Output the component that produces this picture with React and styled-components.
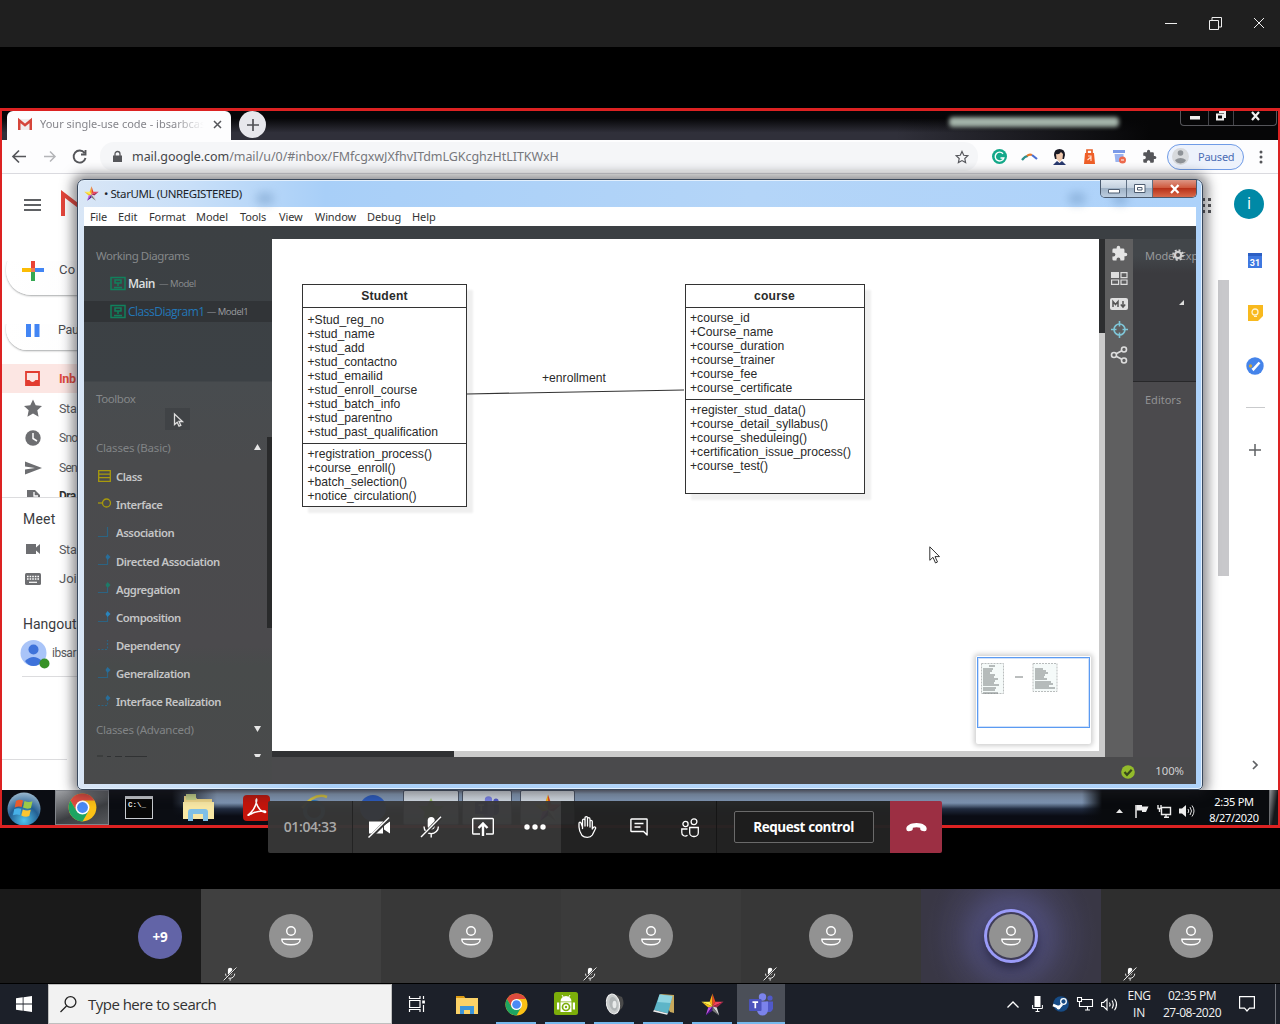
import React from 'react';
import styled, { createGlobalStyle, css } from 'styled-components';

const ui = '"Open Sans", "Noto Sans", sans-serif';
const noto = '"Noto Sans", "Open Sans", sans-serif';
const roboto = 'Roboto, sans-serif';

const Global = createGlobalStyle`
  *, *::before, *::after { box-sizing: border-box; }
  html, body { margin: 0; padding: 0; background: #000; }
  body { width: 1280px; height: 1024px; overflow: hidden; font-family: ${ui}; }
  svg { display: block; flex: none; overflow: visible; }
`;

const row = css`display: flex; align-items: center;`;
const center = css`display: flex; align-items: center; justify-content: center;`;

const Label = styled.span`
  font-family: ${p => p.$font || ui};
  font-size: ${p => p.$size || 12}px;
  font-weight: ${p => p.$weight || 400};
  letter-spacing: ${p => p.$track || 0}px;
  color: ${p => p.$color || 'inherit'};
  line-height: 1.2;
  white-space: nowrap;
`;

/* ---------- Outer frame ---------- */
const Desktop = styled.div`
  width: 1280px; height: 1024px; display: flex; flex-direction: column; background: #000; overflow: hidden;
`;
const TitleBar = styled.header`
  ${row} height: 47px; flex: none; background: #1f1f1f; justify-content: flex-end; padding: 0 15px 1px 0; gap: 32px;
`;
const Stage = styled.main`
  position: relative; height: 842px; flex: none; padding-top: 61px; background: #000;
`;

/* ---------- Shared screen ---------- */
const Shared = styled.section`
  position: relative; width: 1280px; height: 720px; display: flex; flex-direction: column; overflow: hidden;
  border: solid #dc2222; border-width: 3px 2px; background: #fff;
`;
const TabStrip = styled.div`
  position: relative; display: flex; height: 29px; flex: none; padding-left: 5px;
  background: linear-gradient(90deg, rgba(0,0,0,0) 70%, #060607 90%), linear-gradient(#050507 25%, #30303a 75%);
`;
const Tab = styled.div`
  ${row} width: 224px; height: 29px; padding: 0 9px 3px 11px; background: #fdfdfe; border-radius: 6px 6px 0 0;
`;
const TabTitle = styled(Label)`
  width: 168px; margin-left: 8px; overflow: hidden;
  mask-image: linear-gradient(90deg, #000 80%, transparent 98%);
`;
const NewTab = styled.div`
  ${center} width: 27px; height: 27px; margin-left: 8px; border-radius: 50%; background: #e7e7ec;
`;
const GlassGlow = styled.div`
  width: 170px; height: 10px; margin: 6px 0 0 683px; border-radius: 4px; background: #a3b3a9; filter: blur(2px);
`;
const ChromeControls = styled.div`
  display: flex; width: 97px; height: 15px; margin-left: 61px; border: 1px solid #55555a; border-top: 0; border-radius: 0 0 4px 4px;
  & > div { ${center} border-right: 1px solid #45454a; flex: 0 0 28px; padding-bottom: 4px; }
  & > div:nth-child(2) { flex-basis: 25px; }
  & > div:first-child { padding-bottom: 0; }
  & > div:last-child { flex: 1; border: 0; }
`;
const AddressBar = styled.div`
  ${row} height: 34px; flex: none; border-bottom: 1px solid #dadadf; background: #fdfdfe;
`;
const NavIcons = styled.div` ${row} width: 98px; padding-left: 10px; gap: 15px; `;
const Omnibox = styled.div`
  ${row} width: 878px; height: 29px; padding: 0 9px 0 12px; background: #f5f6f8; border-radius: 14px;
  & > svg:last-child { margin-left: auto; }
`;
const Url = styled(Label)` margin-left: 9px; color: #77787c; b { color: #45464a; font-weight: 400; } `;
const Extensions = styled.div` display: grid; grid-template-columns: repeat(6, 30px); margin-left: 6px; justify-items: center; align-items: center; `;
const ProfilePill = styled.div`
  ${row} width: 77px; height: 26px; margin-left: 3px; padding-left: 4px; gap: 9px; border: 1px solid #6f9be6; border-radius: 13px; background: #edf2fc;
`;
const PageArea = styled.div` display: flex; height: 616px; flex: none; justify-content: space-between; `;

const Sidebar = styled.nav` width: 77px; overflow: hidden; `;
const GmailHead = styled.div` ${row} height: 62px; padding-left: 22px; gap: 20px; `;
const Card = styled.div`
  ${row} width: 120px; height: ${p => p.$h}px; margin: ${p => p.$m}; padding-left: ${p => p.$pad}px; gap: ${p => p.$gap}px;
  border-radius: ${p => p.$h / 2}px; background: linear-gradient(90deg, #fff, #fcfcfd); box-shadow: 0 1px 2px rgba(60,64,67,.45);
  clip-path: inset(16px -6px -6px -6px);
`;
const NavRow = styled.div`
  ${row} height: ${p => p.$h || 30}px; width: 140px; overflow: hidden; align-items: ${p => (p.$cut ? 'flex-start' : 'center')};
  padding-top: ${p => (p.$cut ? 6 : 0)}px; padding-left: 22px; background: ${p => (p.$active ? '#fce6e3' : 'transparent')};
  svg { margin-right: 17px; }
`;
const NavHead = styled.div` ${row} height: 30px; margin-top: ${p => p.$mt}px; padding-left: 21px; `;
const Contact = styled.div` ${row} height: 28px; padding-left: 18px; gap: 3px; `;
const Divider = styled.div` height: 1px; width: ${p => p.$w}px; margin: ${p => p.$m}; background: #dcdcde; `;

const RightRail = styled.aside` display: flex; width: 77px; `;
const AppsCol = styled.div` width: 17px; padding: 24px 0 0 1px; `;
const ScrollCol = styled.div`
  width: 11px; padding-top: 106px; &::after { content: ''; display: block; height: 296px; background: #c8c8cb; }
`;
const AddonCol = styled.div` position: relative; width: 49px; display: flex; flex-direction: column; align-items: center; padding: 15px 0 0 3px; `;
const InitialDisc = styled.div` ${center} width: 30px; height: 30px; margin: 0 12px 0 0; flex: none; border-radius: 50%; background: #0089a6; color: #fff; `;
const Slot = styled.div` ${center} height: ${p => p.$h}px; flex: none; `;

/* ---------- StarUML window ---------- */
const AppWindow = styled.div`
  position: absolute; left: 75px; top: 68px; width: 1126px; height: 611px; display: flex; flex-direction: column;
  border: 1px solid #39485c; border-radius: 7px 7px 5px 5px; padding: 0 6px 5px;
  background: linear-gradient(90deg, #d9e6f6, #c8dff8 10%, #a8cff8 22%, #b4d5f8 60%, #add2fa 100%);
  box-shadow: 0 0 12px 5px rgba(30,30,35,.5), inset 0 0 0 1px #e3f0fd;
`;
const WinTitle = styled.div` ${row} position: relative; height: 27px; flex: none; `;
const WinName = styled(Label)` margin-left: 5px; color: #1b1f2a; `;
const Smudge = styled.i`
  position: absolute; left: ${p => p.$x}px; top: 12px; width: ${p => p.$w}px; height: 13px; background: #5d87b5; opacity: .35; filter: blur(4px); border-radius: 6px;
`;
const AeroButtons = styled.div`
  position: relative; display: flex; width: 97px; height: 18px; margin: 0 -1px 9px auto; border: 1px solid #4a5b70; border-top: 0; border-radius: 0 0 5px 5px; overflow: hidden;
`;
const AeroBtn = styled.div`
  ${center} flex: 0 0 ${p => p.$w}px; border-right: 1px solid #5f7084;
  background: ${p => (p.$close ? 'linear-gradient(#dd9685, #cf5a3f 45%, #b8321a 50%, #d8694a)' : 'linear-gradient(#dfe8f1, #c4d1df 45%, #9fb2c6 50%, #bccddf)')};
`;
const MenuBar = styled.div` ${row} height: 19px; flex: none; background: #fff; padding-left: 6px; `;
const MenuItem = styled(Label)` width: ${p => p.$w}px; color: #333; flex: none; `;
const WinBody = styled.div` display: flex; height: 558px; flex: none; background: #3b3f43; `;

const LeftPanel = styled.div`
  position: relative; width: 188px; display: flex; flex-direction: column;
  background: linear-gradient(#3c4043 0, #3c4145 155px, #484c4f 156px, #4a4b4d 240px, #4b4a4d 420px, #484b4b 440px, #494a4b);
`;
const Working = styled.div` height: 155px; flex: none; padding-top: 19px; `;
const PanelHead = styled.div` ${row} height: ${p => p.$h}px; padding-left: 12px; color: #85888a; margin: ${p => p.$m || 0}; `;
const DiagramRow = styled.div`
  ${row} height: ${p => p.$h}px; margin-bottom: 5px; padding: 1px 0 0 26px; gap: 2px; background: ${p => (p.$active ? '#313437' : 'transparent')};
  color: ${p => (p.$active ? '#2377b8' : '#dfe0e1')};
`;
const CursorTool = styled.div` ${center} width: 25px; height: 22px; margin-left: 81px; padding: 2px 0 0 2px; background: #404346; `;
const GroupHead = styled.div`
  ${row} height: ${p => p.$h}px; margin-top: ${p => p.$mt || 0}px; padding: 0 11px 0 12px; justify-content: space-between; overflow: hidden; color: #818486;
`;
const ToolRow = styled.div` ${row} height: 28.1px; padding: 2px 0 0 14px; gap: 5px; color: #c4c5c6; svg { margin-top: -2px; } `;
const PanelThumb = styled.div` position: absolute; right: 0; top: 211px; width: 5px; height: 191px; background: #292a2b; `;

const MainCol = styled.div` display: flex; flex-direction: column; width: 924px; padding-top: 13px; `;
const MainRow = styled.div` display: flex; height: 518px; `;
const CanvasFrame = styled.div`
  display: grid; width: 833px; grid-template-columns: 827px 6px; grid-template-rows: 512px 6px;
`;
const Canvas = styled.div` position: relative; background: #fff; `;
const VScroll = styled.div` background: linear-gradient(#2d2e30 94px, #cbcbcb 94px); `;
const HScroll = styled.div` grid-column: 1 / 3; background: linear-gradient(90deg, #303133 182px, #cbcbcb 182px); `;

const UmlClass = styled.div`
  position: absolute; left: ${p => p.$x}px; top: 45px; width: ${p => p.$w}px; height: ${p => p.$h}px; background: #fff;
  border: 1px solid #333; box-shadow: 6px 6px 2px #efefef; color: #2a2a2a; font: 12.150px/14px "Liberation Sans", Arial, sans-serif;
`;
const UmlName = styled.div` ${center} height: 23px; border-bottom: 1px solid #333; font-weight: 700; letter-spacing: .2px; `;
const UmlList = styled.div`
  height: ${p => p.$h}px; padding: ${p => p.$pt}px 0 0 4.500px; border-bottom: ${p => (p.$rule ? '1px solid #333' : 0)}; white-space: nowrap;
`;
const LinkLabel = styled.span` position: absolute; left: 270px; top: 132px; font: 12.150px/15px "Liberation Sans", Arial, sans-serif; color: #2a2a2a; `;
const LinkLine = styled.svg` position: absolute; left: 195px; top: 148px; `;
const Pointer = styled.svg` position: absolute; left: 657px; top: 307px; `;
const MiniMap = styled.div`
  position: absolute; left: 704px; top: 417px; width: 115px; height: 88px; padding: 1px; background: #fff; border-radius: 2px; box-shadow: 0 0 5px 2px #cfcfcf;
`;
const MiniView = styled.div` height: 71px; border: 1px solid #5b9bf2; box-shadow: inset 0 0 0 1px #cfe0fa; padding: 5px 3px; display: flex; `;

const ToolStrip = styled.div` width: 28px; display: flex; flex-direction: column; align-items: center; background: #5f5f60; padding-top: 2px; `;
const StripCell = styled.div` ${center} height: 25.3px; `;
const Explorer = styled.div` width: 63px; overflow: hidden; background: #4b4a4d; `;
const ModelPane = styled.div` position: relative; height: 143px; background: #3b3b3f; border-bottom: 1px solid #28282a; `;
const ModelHead = styled.div` ${row} height: 34px; padding-left: 12px; color: #98999b; white-space: nowrap; background: linear-gradient(#42464a 50%, #3b3b3f); `;
const Gear = styled.div` position: absolute; left: 39px; top: 10px; `;
const Corner = styled.div` position: absolute; left: 46px; top: 61px; border: solid transparent; border-width: 0 0 5px 5px; border-bottom-color: #ddd; `;
const EditorHead = styled.div` ${row} height: 35px; padding-left: 12px; color: #929294; `;
const StatusBar = styled.div` ${row} height: 27px; background: #4a4a4c; justify-content: flex-end; padding-right: 12px; gap: 20px; `;

/* ---------- Windows 7 taskbar ---------- */
const SevenBar = styled.div`
  display: flex; height: 35px; flex: none; padding-left: 3px;
  background:
    linear-gradient(90deg, #0b0d13 170px, rgba(11,13,19,0) 215px, rgba(11,13,19,0) 1080px, #090b0e 1100px),
    linear-gradient(#6f7686 0, #8ba1bd 4px, #7e94b2 13px, #202a3e 19px, #0a0c14 26px);
`;
const SevenCell = styled.div`
  ${center} flex: 0 0 ${p => p.$w}px; margin-left: ${p => p.$ml || 0}px;
  ${p => p.$open && css`background: linear-gradient(160deg, #a0a2a6, #3c3e42 60%, #55575b); border: 1px solid #83868c;`}
  ${p => p.$lit && css`background: linear-gradient(#e3e8ee, #a9b8cb); border: 1px solid #4b5669; border-radius: 2px;`}
`;
const SevenTray = styled.div` ${row} margin-left: auto; gap: 8px; color: #fff; & > svg { margin-top: 6px; } `;
const SevenClock = styled.div` width: 58px; margin: 4px -2px 0 3px; text-align: center; span { display: block; line-height: 15.5px; } `;
const ShowDesk = styled.div` width: 9px; height: 35px; background: linear-gradient(100deg, #8e9093, #15171a 60%); border-left: 1px solid #6b6d70; `;

/* ---------- Meeting controls ---------- */
const CallBar = styled.div`
  position: absolute; left: 268px; top: 754px; width: 674px; height: 52px; display: flex; border-radius: 2px; overflow: hidden; color: #fff;
`;
const CallTimer = styled.div` ${center} width: 85px; background: rgba(55,55,55,.97); border-right: 1px solid #232323; color: #a8a8a8; `;
const CallGroup = styled.div`
  display: flex; width: ${p => p.$w}px; background: ${p => (p.$dark ? 'rgba(35,35,35,.97)' : 'rgba(55,55,55,.96)')}; border-right: ${p => (p.$line ? '1px solid #151515' : 0)};
`;
const CallBtn = styled.div` ${center} width: 52px; `;
const CallAction = styled.div` ${center} width: 173px; background: rgba(35,35,35,.97); `;
const RequestBtn = styled.div` ${center} width: 140px; height: 32px; margin-right: 0; border: 1px solid #6a6a6a; border-radius: 2px; background: #1d1d1d; `;
const HangUp = styled.div` ${center} width: 52px; background: #9c2f43; `;

/* ---------- Participants ---------- */
const Roster = styled.section` display: flex; height: 94px; flex: none; `;
const Tile = styled.div`
  position: relative; ${center} flex: ${p => p.$w ? `0 0 ${p.$w}px` : '0 0 180px'}; background: ${p => p.$bg}; overflow: hidden;
  justify-content: ${p => (p.$end ? 'flex-end' : 'center')}; padding-right: ${p => (p.$end ? 19 : 0)}px;
`;
const Avatar = styled.div`
  ${center} width: 44px; height: 44px; border-radius: 50%; background: ${p => p.$bg || '#929292'}; color: #fff; flex: none;
  margin-top: ${p => (p.$bg ? 2 : 0)}px;
  ${p => p.$speaking && css`box-shadow: 0 0 0 2px #3f3c58, 0 0 0 5px #9a9bf8, 0 6px 12px 4px rgba(20,18,35,.65), 0 0 38px 14px rgba(98,98,167,.5);`}
`;
const MuteBadge = styled.div` position: absolute; left: 22px; bottom: 2px; `;

/* ---------- Windows 10 taskbar ---------- */
const TenBar = styled.footer` display: flex; height: 40px; margin-top: 1px; flex: none; background: #1c2029; color: #f3f3f3; `;
const StartBtn = styled.div` ${center} width: 48px; `;
const SearchBox = styled.div` ${row} width: 344px; padding-left: 11px; gap: 11px; border: 1px solid #bfbfbf; background: #f2f2f2; color: #333; `;
const TenCell = styled.div`
  ${center} position: relative; flex: 0 0 ${p => p.$w || 49}px; background: ${p => (p.$active ? '#4b4f58' : 'transparent')};
  ${p => p.$run && css`&::after { content: ''; position: absolute; left: ${p.$active ? 0 : 4}px; right: ${p.$active ? 0 : 5}px; bottom: 0; height: 2px; background: #76b9ed; }`}
`;
const TenTray = styled.div` ${row} margin-left: auto; `;
const TrayCell = styled.div` ${center} width: ${p => p.$w}px; `;
const Stack = styled.div` width: ${p => p.$w}px; text-align: center; span { display: block; line-height: 17px; } `;
const Peek = styled.div` width: 5px; height: 40px; border-left: 1px solid #70737a; `;

/* ---------- Drawings ---------- */
const Svg = ({ w, h = w, vb, children, ...rest }) => (
  <svg width={w} height={h} viewBox={vb || `0 0 ${w} ${h}`} fill="none" {...rest}>{children}</svg>
);
const ChromeLogo = ({ s }) => (
  <Svg w={s} vb="0 0 48 48">
    <circle cx="24" cy="24" r="23" fill="#fbc116" />
    <path d="M24 1A23 23 0 0 1 43.9 12.5H24L14 29.8 4.1 12.5A23 23 0 0 1 24 1z" fill="#dd4b3e" />
    <path d="M4.1 12.5A23 23 0 0 0 24 47L34 29.8 24 34.5 14 29.8z" fill="#1da462" />
    <circle cx="24" cy="24" r="11.5" fill="#fff" /><circle cx="24" cy="24" r="9" fill="#4a8af4" />
  </Svg>
);
const StarLogo = ({ s }) => (
  <Svg w={s} vb="0 0 24 24">
    <path d="M12 .5 9 9l3 5z" fill="#fdb515" /><path d="M12 .5l3 8.500-3 5z" fill="#e8491f" />
    <path d="M.5 9H9l3 5z" fill="#fff04a" /><path d="M.5 9 7.500 15l4.500-1z" fill="#f7c21b" />
    <path d="M23.500 9H15l-3 5z" fill="#f0425e" /><path d="M23.500 9 16.500 15l-4.500-1z" fill="#a8264c" />
    <path d="M5 23.500 7.500 15l4.500-1z" fill="#c44fe0" /><path d="M5 23.500l7-5V14z" fill="#4b148b" />
    <path d="M19 23.500 16.500 15l-4.500-1z" fill="#d8d8d8" /><path d="M19 23.500l-7-5V14z" fill="#777" />
  </Svg>
);
const MicOff = ({ s }) => (
  <Svg w={s} vb="0 0 22 22" stroke="#fff" strokeWidth="1.4">
    <rect x="7.7" y="1" width="7" height="12.5" rx="3.5" fill="#fff" stroke="none" />
    <path d="M4 10.5a7.2 7.2 0 0 0 14.4 0M11.2 18v3.5" /><path d="M1.5 21.5 21 1" stroke="#333" strokeWidth="3.5" /><path d="M1 21 21 .8" />
  </Svg>
);
const Person = () => (
  <Svg w={20} vb="0 0 20 20" stroke="#fff" strokeWidth="1.4"><circle cx="10" cy="5" r="4.3" /><path d="M.9 13.2h18.2v.8c0 3-4 4.800-9.1 4.800S.9 17 .9 14z" /></Svg>
);
const Puzzle = ({ s, c }) => (
  <Svg w={s} vb="0 0 24 24"><path fill={c} d="M20.5 11H19V7a2 2 0 0 0-2-2h-4V3.5a2.5 2.5 0 0 0-5 0V5H4a2 2 0 0 0-2 2v3.8h1.500a2.700 2.700 0 0 1 0 5.400H2V20a2 2 0 0 0 2 2h3.800v-1.500a2.700 2.700 0 0 1 5.400 0V22H17a2 2 0 0 0 2-2v-4h1.500a2.500 2.500 0 0 0 0-5z" /></Svg>
);
const GmailM = ({ w, h }) => (
  <Svg w={w} h={h} vb="0 0 28 22"><path d="M0 0h28v22H0z" fill="#f1eeee" /><path d="M2.500 22V3L14 12.500 25.500 3v19" stroke="#d5453a" strokeWidth="5" /></Svg>
);
const DiagramIcon = () => (
  <Svg w={16} vb="0 0 16 16" stroke="#11805c" strokeWidth="1.500"><path d="M1 1.500h14v12H1zM5 4h6v3H5zM8 7v3M4 11.500h8" /></Svg>
);
const Folder = () => (
  <Svg w={22} h={19}><path d="M0 1h8l2 3H0z" fill="#dc9a12" /><path d="M0 3h22v16H0z" fill="#fbd267" /><path d="M4 19v-8h14v8h-4v-4H8v4z" fill="#3c95da" /></Svg>
);
const TeamsLogo = () => (
  <Svg w={25} h={23} vb="0 0 25 23"><circle cx="13.500" cy="4" r="3.700" fill="#7b83eb" /><circle cx="21" cy="5" r="2.600" fill="#5059c9" />
    <path d="M17 8.500h7v7a4 4 0 0 1-6 3z" fill="#5059c9" /><path d="M8 8.500h11v8.500a5.500 5.500 0 0 1-11 0z" fill="#7b83eb" /><rect x="0" y="6" width="12.500" height="12" rx="1" fill="#4b53bc" />
    <path d="M3.500 9.200h5.600M6.300 9.200v6" stroke="#fff" strokeWidth="1.700" /></Svg>
);

function ToolGlyph({ kind }) {
  const y = '#a89a0c', b = '#27688c';
  if (kind === 'class') return <Svg w={13} h={12} stroke={y} strokeWidth="1.300"><path d="M.7.7h11.600v10.600H.7zM.7 4.200h11.600M.7 7.700h11.600" /></Svg>;
  if (kind === 'iface') return <Svg w={13} h={12} stroke={y} strokeWidth="1.300"><circle cx="8.500" cy="5" r="4" /><path d="M0 5h4.500" /></Svg>;
  const head = { directed: '#2375a8', agg: '#17836d', comp: '#258fd0', gen: '#2375a8', real: '#2375a8' }[kind];
  return (
    <Svg w={13} h={12} stroke={b} strokeWidth="1.200" opacity=".85">
      <path d="M0 10.500h9.500V1" strokeDasharray={kind === 'dep' || kind === 'real' ? '2 1.500' : undefined} />
      {head && <path d="m9.500 0 3 3-3 3-2-3z" fill={head} stroke="none" />}
    </Svg>
  );
}

const tools = [
  ['class', 'Class'], ['iface', 'Interface'], ['assoc', 'Association'], ['directed', 'Directed Association'], ['agg', 'Aggregation'],
  ['comp', 'Composition'], ['dep', 'Dependency'], ['gen', 'Generalization'], ['real', 'Interface Realization'],
];
const menus = [['File', 28], ['Edit', 31], ['Format', 47], ['Model', 44], ['Tools', 39], ['View', 36], ['Window', 52], ['Debug', 45], ['Help', 40]];
const classes = [
  { name: 'Student', x: 30, w: 165, h: 223, attrH: 136, pt: 5, attrs: ['+Stud_reg_no', '+stud_name', '+stud_add', '+stud_contactno', '+stud_emailid', '+stud_enroll_course', '+stud_batch_info', '+stud_parentno', '+stud_past_qualification'], ops: ['+registration_process()', '+course_enroll()', '+batch_selection()', '+notice_circulation()'] },
  { name: 'course', x: 412.5, w: 180, h: 210, attrH: 92, pt: 3, attrs: ['+course_id', '+Course_name', '+course_duration', '+course_trainer', '+course_fee', '+course_certificate'], ops: ['+register_stud_data()', '+course_detail_syllabus()', '+course_sheduleing()', '+certification_issue_process()', '+course_test()'] },
];
const tiles = [
  { bg: '#404040', muted: true }, { bg: '#383838' }, { bg: '#3b3b3b', muted: true }, { bg: '#373737', muted: true },
  { bg: 'radial-gradient(circle at 50% 50%, #504f78 0, #3f3d52 55%, #393745 85%)', speaking: true }, { bg: '#2e2e2e', muted: true, w: 179 },
];

function Browser() {
  return (
    <>
      <TabStrip>
        <Tab>
          <GmailM w={14} h={11} />
          <TabTitle $font={noto} $size={11} $color="#85858b">Your single-use code - ibsarbcas</TabTitle>
          <Svg w={9} stroke="#55565a" strokeWidth="1.500" style={{ marginLeft: 6 }}><path d="m1 1 7 7M8 1 1 8" /></Svg>
        </Tab>
        <NewTab><Svg w={12} stroke="#505156" strokeWidth="1.700"><path d="M6 0v12M0 6h12" /></Svg></NewTab>
        <GlassGlow />
        <ChromeControls>
          <div><Svg w={10} h={4}><path d="M0 0h10v3.500H0z" fill="#eee" /></Svg></div>
          <div><Svg w={10} h={10} stroke="#eee" strokeWidth="2"><path d="M1 3.500h6v5H1zM3 1h6v6" /></Svg></div>
          <div><Svg w={9} h={8} stroke="#eee" strokeWidth="2.200"><path d="m1 0 7 8M8 0 1 8" /></Svg></div>
        </ChromeControls>
      </TabStrip>
      <AddressBar>
        <NavIcons>
          <Svg w={15} stroke="#55565a" strokeWidth="1.700"><path d="M14 7.500H1M7 1.500l-6 6 6 6" /></Svg>
          <Svg w={15} stroke="#b4b5b8" strokeWidth="1.500"><path d="M2 7.500h11M8 2.500l5 5-5 5" /></Svg>
          <Svg w={15} stroke="#55565a" strokeWidth="1.900"><path d="M12.500 4A6 6 0 1 0 13.500 9M13.500 1v4.500H9" /></Svg>
        </NavIcons>
        <Omnibox>
          <Svg w={11} h={12}><path d="M1 4.500h9V11H1z" fill="#56575b" /><path d="M3 5V3a2.500 2.500 0 0 1 5 0v2" stroke="#56575b" strokeWidth="1.300" /></Svg>
          <Url $size={12.5} $font={noto} $track={-0.05}><b>mail.google.com</b>/mail/u/0/#inbox/FMfcgxwJXfhvITdmLGKcghzHtLITKWxH</Url>
          <Svg w={14} vb="0 0 24 24" stroke="#55565b" strokeWidth="2"><path d="m12 2.500 3 6.500 7 .8-5.200 4.800 1.400 7-6.200-3.500-6.200 3.500 1.400-7L2 9.800 9 9z" /></Svg>
        </Omnibox>
        <Extensions>
          <Svg w={15}><circle cx="7.500" cy="7.500" r="7.500" fill="#14a98a" /><path d="M11 4.700A4.400 4.400 0 1 0 11.800 9H8.500" stroke="#fff" strokeWidth="1.400" /></Svg>
          <Svg w={15} h={8} strokeWidth="2.200"><path d="M0 7q3-4 6-4" stroke="#2e8f8a" /><path d="M5 3q2-2 5-1" stroke="#e9792b" /><path d="m10 2 5 4" stroke="#4a6fd0" /></Svg>
          <Svg w={15} h={16}><path d="M2 6q0-6 5.500-6T13 6l-1 4H3z" fill="#191924" /><path d="M4 5q3 1 5-2l2 2-.5 5-3 3-3-3z" fill="#f0c9ae" /><path d="m1 16 4-4 2.500 2 2.500-2 4 4z" fill="#28396e" /></Svg>
          <Svg w={11} h={15}><path d="M3 5V1h5v4" stroke="#e8622b" strokeWidth="1.700" /><path d="M1 4h9l1 11H0z" fill="#ef5f28" /><path d="M3.500 11 7 8M4 7h3v5" stroke="#ffd9c8" strokeWidth="1.200" /></Svg>
          <Svg w={13} h={14}><path d="M0 0h12v3H0z" fill="#7b9ae8" /><path d="M1.500 4h9v8h-8z" fill="#9bb4f0" /><circle cx="9.500" cy="10" r="3.500" fill="#ee6a4d" /><path d="M8 10h3" stroke="#fff" /></Svg>
          <Puzzle s={15} c="#55565a" />
        </Extensions>
        <ProfilePill>
          <Svg w={17} vb="0 0 17 17"><circle cx="8.500" cy="8.500" r="8.500" fill="#d8dadd" /><circle cx="8.500" cy="5" r="2.800" fill="#8e9297" /><path d="M3 12q5.500-4 11 0-1 3-5.500 3.500Q4 15 3 12z" fill="#8e9297" /></Svg>
          <Label $size={11} $font={noto} $track={-0.25} $color="#4b6cb4">Paused</Label>
        </ProfilePill>
        <Svg w={4} h={14} style={{ marginLeft: 15 }}><circle cx="2" cy="2" r="1.500" fill="#55565a" /><circle cx="2" cy="7" r="1.500" fill="#55565a" /><circle cx="2" cy="12" r="1.500" fill="#55565a" /></Svg>
      </AddressBar>
    </>
  );
}

function Gmail() {
  const g = '#6d6e71';
  return (
    <PageArea>
      <Sidebar>
        <GmailHead>
          <Svg w={17} h={12} stroke="#5f6164" strokeWidth="1.800"><path d="M0 1h17M0 6h17M0 11h17" /></Svg>
          <Svg w={30} h={24}><path d="M0 22V0l17 13" fill="none" stroke="#e4453a" strokeWidth="4" transform="translate(2 1)" /></Svg>
        </GmailHead>
        <Card $h={50} $m="9px 0 0 4px" $pad={16} $gap={15}>
          <Svg w={22} strokeWidth="4"><path d="M11 0v9" stroke="#ea4335" /><path d="M0 11h9" stroke="#fbbc05" /><path d="M11 13v9" stroke="#34a853" /><path d="M13 11h9M11 11h3" stroke="#4285f4" /><path d="M9 11h4" stroke="#f07a50" /></Svg>
          <Label $size={13} $font={roboto} $track={0.3} $color="#4a4c50">Co</Label>
        </Card>
        <Card $h={42} $m="13px 0 14px 4px" $pad={20} $gap={18}>
          <Svg w={14} h={16}><path d="M0 0h5v16H0zM8.500 0h5v16h-5z" fill="#4285f4" /></Svg>
          <Label $size={12.5} $font={roboto} $track={-0.3} $color="#4a4c50">Pau</Label>
        </Card>
        <NavRow $h={29} $active>
          <Svg w={18}><path d="M2 2h13v13H2z" stroke="#e23c30" strokeWidth="1.800" /><path d="M2 10h3.500q3 4 6 0H15v5H2z" fill="#e23c30" /></Svg>
          <Label $size={12.5} $font={roboto} $weight={700} $track={-0.3} $color="#e0483c">Inb</Label>
        </NavRow>
        <NavRow>
          <Svg w={18} vb="2 2 20 20"><path d="m12 2.500 3 6.500 7 .8-5.200 4.800 1.400 7-6.200-3.500-6.200 3.500 1.400-7L2 9.800 9 9z" fill={g} /></Svg>
          <Label $size={12.5} $font={roboto} $track={-0.3} $color="#5a5b5e">Sta</Label>
        </NavRow>
        <NavRow>
          <Svg w={18}><circle cx="9" cy="9" r="7.700" fill={g} /><path d="M9 4v5.500l4 2.500" stroke="#fff" strokeWidth="1.500" /></Svg>
          <Label $size={12} $font={roboto} $track={-0.7} $color="#5a5b5e">Sno</Label>
        </NavRow>
        <NavRow>
          <Svg w={18}><path d="M1 2.500 18 9 1 15.500V10.500L11 9 1 7.500z" fill={g} /></Svg>
          <Label $size={12} $font={roboto} $track={-0.7} $color="#5a5b5e">Sen</Label>
        </NavRow>
        <NavRow $h={14} $cut>
          <Svg w={18}><path d="M3 1h8l5 5v12H3z" fill={g} /><path d="M10 3v4h4" stroke="#fff" strokeWidth="1.300" /></Svg>
          <Label $size={12} $font={roboto} $weight={700} $track={-0.6} $color="#333">Dra</Label>
        </NavRow>
        <Divider $w={76} $m="0" />
        <NavHead $mt={6}><Label $size={14} $font={roboto} $track={0.2} $color="#3b3c3f">Meet</Label></NavHead>
        <NavRow>
          <Svg w={18}><path d="M2 4h10v3.500L16 4v10l-4-3.500V14H2z" fill={g} /></Svg>
          <Label $size={12.5} $font={roboto} $track={-0.3} $color="#5a5b5e">Sta</Label>
        </NavRow>
        <NavRow>
          <Svg w={18}><rect x="1" y="3" width="16" height="12" rx="1.500" fill={g} /><path d="M3 6.500h12M3 9h12" stroke="#fff" strokeWidth="1.400" strokeDasharray="1.600 1" /><path d="M5 12.300h8" stroke="#fff" strokeWidth="1.200" /></Svg>
          <Label $size={13} $font={roboto} $color="#5a5b5e">Joi</Label>
        </NavRow>
        <NavHead $mt={15}><Label $size={14} $font={roboto} $color="#3b3c3f">Hangout</Label></NavHead>
        <Contact>
          <Svg w={29} h={28} vb="0 0 29 28"><circle cx="13.500" cy="14" r="13" fill="#a9c4f8" /><circle cx="13.500" cy="10.500" r="5" fill="#3e72da" /><path d="M5 22q8.500-8 17 0-3 5-8.500 5T5 22z" fill="#3e72da" /><circle cx="24.500" cy="24.500" r="5" fill="#379127" /></Svg>
          <Label $size={12} $font={roboto} $track={-0.5} $color="#5a5b5e">ibsar</Label>
        </Contact>
        <Divider $w={60} $m="9px 0 0 20px" />
        <Divider $w={65} $m="82px 0 0 0" />
      </Sidebar>
      <RightRail>
        <AppsCol><Svg w={11} h={16}><path d="M0 0h3v3H0zM6 0h3v3H6zM0 6h3v3H0zM6 6h3v3H6zM0 12h3v3H0zM6 12h3v3H6z" fill="#55565a" /></Svg></AppsCol>
        <ScrollCol />
        <AddonCol>
          <InitialDisc><Label $size={16}>i</Label></InitialDisc>
          <Slot $h={82}><Svg w={15} h={17}><path d="M0 1h14v15H0z" fill="#3f78e0" /><path d="M0 1h14v3H0z" fill="#2c5fc4" /><text x="7" y="13.500" fontSize="9" fontFamily="Roboto" fontWeight="700" fill="#fff" textAnchor="middle">31</text></Svg></Slot>
          <Slot $h={24}><Svg w={16} h={16}><path d="M1 0h15v11l-5 5H1z" fill="#f8b91e" /><circle cx="8" cy="7" r="3" stroke="#fff3cf" strokeWidth="1.300" /><path d="M7 11.500h3" stroke="#fff3cf" /></Svg></Slot>
          <Slot $h={81}><Svg w={18}><circle cx="9" cy="9" r="8.700" fill="#4584ea" /><circle cx="4.500" cy="9" r="1.700" fill="#d5a73a" /><path d="m6.500 11 1 1.200 6-6.700" stroke="#fff" strokeWidth="2.600" /></Svg></Slot>
          <Slot $h={3}><Svg w={19} h={1}><path d="M0 .5h19" stroke="#c9cacc" /></Svg></Slot>
          <Slot $h={82}><Svg w={12} stroke="#5f6164" strokeWidth="1.500"><path d="M6 0v12M0 6h12" /></Svg></Slot>
          <Slot $h={547}><Svg w={6} h={10} stroke="#5f6164" strokeWidth="1.700"><path d="m1 1 4 4-4 4" /></Svg></Slot>
        </AddonCol>
      </RightRail>
    </PageArea>
  );
}

function UmlNode({ c }) {
  return (
    <UmlClass $x={c.x} $w={c.w} $h={c.h}>
      <UmlName>{c.name}</UmlName>
      <UmlList $h={c.attrH} $pt={c.pt} $rule>{c.attrs.map(a => <div key={a}>{a}</div>)}</UmlList>
      <UmlList $pt={3}>{c.ops.map(a => <div key={a}>{a}</div>)}</UmlList>
    </UmlClass>
  );
}

function StarUml() {
  return (
    <AppWindow>
      <WinTitle>
        <StarLogo s={15} />
        <WinName $size={11.5} $font={noto} $track={-0.42}>• StarUML (UNREGISTERED)</WinName>
        <Smudge $x={172} $w={18} /><Smudge $x={984} $w={18} /><Smudge $x={1028} $w={16} />
        <AeroButtons>
          <AeroBtn $w={26}><Svg w={12} h={5} style={{ marginTop: 5 }}><path d="M.5.500h11v3.500H.5z" fill="#fff" stroke="#4d5c70" /></Svg></AeroBtn>
          <AeroBtn $w={26}><Svg w={12} h={9}><path d="M.5.500h10.500v8H.5z" fill="#fff" stroke="#4d5c70" /><path d="M3.500 3.500h4.500v2.500H3.500z" stroke="#4d5c70" /></Svg></AeroBtn>
          <AeroBtn $w={45} $close><Svg w={10} h={8}><path d="m1 0 7.500 8M8.500 0 1 8" stroke="#fff" strokeWidth="2.300" /></Svg></AeroBtn>
        </AeroButtons>
      </WinTitle>
      <MenuBar>{menus.map(([m, w]) => <MenuItem key={m} $w={w} $size={11} $font={noto} $track={-0.1}>{m}</MenuItem>)}</MenuBar>
      <WinBody>
        <LeftPanel>
          <Working>
            <PanelHead $h={22} $m="0 0 4px"><Label $size={11.5} $font={noto} $track={-0.45}>Working Diagrams</Label></PanelHead>
            <DiagramRow $h={25}><DiagramIcon /><Label $size={12} $weight={600} $track={-0.5}>Main</Label><Label $size={9.5} $track={-0.45} $color="#8b8e91" style={{ marginLeft: 2 }}>— Model</Label></DiagramRow>
            <DiagramRow $h={21} $active><DiagramIcon /><Label $size={12} $track={-0.5}>ClassDiagram1</Label><Label $size={9.5} $track={-0.45} $color="#9b9ea0">— Model1</Label></DiagramRow>
          </Working>
          <PanelHead $h={19} $m="8px 0 0"><Label $size={11.5} $font={noto} $track={-0.4}>Toolbox</Label></PanelHead>
          <CursorTool><Svg w={11} h={14} stroke="#ddd" strokeWidth="1.300"><path d="M1.500 1v10.500l2.700-2.300 1.800 4 1.800-.8L6 8.500h3.500z" /></Svg></CursorTool>
          <GroupHead $h={28} $mt={4}><Label $size={11.5} $font={noto} $track={-0.2}>Classes (Basic)</Label><Svg w={7} h={6} style={{ marginTop: -2 }}><path d="M3.500 0 7 6H0z" fill="#e6e6e6" /></Svg></GroupHead>
          {tools.map(([k, t]) => <ToolRow key={k}><ToolGlyph kind={k} /><Label $size={11.3} $weight={600} $font={noto} $track={-0.45}>{t}</Label></ToolRow>)}
          <GroupHead $h={29}><Label $size={11.5} $font={noto} $track={-0.27} style={{ marginTop: 2 }}>Classes (Advanced)</Label><Svg w={7} h={6}><path d="M3.500 6 7 0H0z" fill="#e6e6e6" /></Svg></GroupHead>
          <GroupHead $h={14} style={{ alignItems: 'flex-start' }}><Svg w={52} h={13}><path d="M1 12h6M11 12.500h4M19 12.500h7M29 12.500h22" stroke="#303233" /></Svg><Svg w={7} h={13}><path d="M0 10h7l-1.500 3h-4z" fill="#e6e6e6" /></Svg></GroupHead>
          <PanelThumb />
        </LeftPanel>
        <MainCol>
          <MainRow>
            <CanvasFrame>
              <Canvas>
                {classes.map(c => <UmlNode key={c.name} c={c} />)}
                <LinkLine width="218" height="10"><path d="M0 7 217 3" stroke="#333" strokeWidth="1.200" /></LinkLine>
                <LinkLabel>+enrollment</LinkLabel>
                <Pointer width="12" height="19" viewBox="0 0 12 19" fill="#fff" stroke="#333"><path d="M.8.800v13.500l3.200-3 2.500 5.700 2-1-2.500-5.400h4.500z" /></Pointer>
                <MiniMap>
                  <MiniView>
                    <Svg w={80} h={34} strokeWidth="1">
                      <path d="M.5.500h22v30H.5zM52 .5h24v28H52z" fill="#f5faf9" stroke="#b9bdbd" strokeDasharray="2 1" />
                      <path d="M8 3h6M2 6h10M2 8h9M2 10h7M2 12h12M2 14h11M2 16h15M2 18h12M2 20h11M2 22h16M2 25h13M2 27h12M2 30h15M34 14h8M54 6h8M54 8h11M54 10h13M54 12h10M54 14h9M54 16h12M54 19h16M54 21h18M54 23h14M54 25h20" stroke="#777d7d" />
                    </Svg>
                  </MiniView>
                </MiniMap>
              </Canvas>
              <VScroll />
              <HScroll />
            </CanvasFrame>
            <ToolStrip>
              <StripCell><Puzzle s={17} c="#e3e3e3" /></StripCell>
              <StripCell><Svg w={17} h={13} stroke="#ddd" strokeWidth="1.200"><path d="M0 0h8v6H0z" fill="#ddd" stroke="none" /><path d="M10 .6h6v5h-6zM.6 8h7v4.400h-7zM10 8h6v4.400h-6z" /></Svg></StripCell>
              <StripCell><Svg w={18} h={12}><rect width="18" height="12" rx="2" fill="#e0e0e0" /><path d="M3 9V3.500l2.500 3 2.500-3V9M13 3v5M10.800 6.500l2.200 2.500 2.200-2.500" stroke="#555" strokeWidth="1.500" /></Svg></StripCell>
              <StripCell><Svg w={17} stroke="#7fc6d8" strokeWidth="1.600"><circle cx="8.500" cy="8.500" r="5.500" /><path d="M8.500 0v5.500M8.500 11.500V17M0 8.500h5.500M11.500 8.500H17" /></Svg></StripCell>
              <StripCell><Svg w={18} h={18} stroke="#ddd" strokeWidth="1.600"><circle cx="4" cy="9" r="2.500" /><circle cx="14" cy="3.500" r="2.500" /><circle cx="14" cy="14.500" r="2.500" /><path d="m6.200 7.700 5.600-3M6.200 10.300l5.600 3" /></Svg></StripCell>
            </ToolStrip>
            <Explorer>
              <ModelPane>
                <ModelHead><Label $size={11} $font={noto} $track={-0.1}>Model Exp</Label></ModelHead>
                <Gear><Svg w={12}><circle cx="6" cy="6" r="3.200" stroke="#d0d0d0" strokeWidth="2.200" /><circle cx="6" cy="6" r="5" stroke="#d0d0d0" strokeWidth="1.600" strokeDasharray="2 1.920" /></Svg></Gear>
                <Corner />
              </ModelPane>
              <EditorHead><Label $size={11} $font={noto}>Editors</Label></EditorHead>
            </Explorer>
          </MainRow>
          <StatusBar>
            <Svg w={14} style={{ marginTop: 2 }}><circle cx="7" cy="7" r="6.800" fill="#93bb2b" /><path d="m3.500 7 2.500 2.800 4.700-5" stroke="#37491a" strokeWidth="2.200" /></Svg>
            <Label $size={11.3} $font={noto} $color="#d0d0d1">100%</Label>
          </StatusBar>
        </MainCol>
      </WinBody>
    </AppWindow>
  );
}

function SevenTaskbar() {
  return (
    <SevenBar>
      <SevenCell $w={38}>
        <Svg w={34} vb="0 0 34 34">
          <defs><radialGradient id="orb" cx=".5" cy=".85" r=".9"><stop offset="0" stopColor="#4fc3ee" /><stop offset=".5" stopColor="#245f92" /><stop offset="1" stopColor="#a9c4d6" /></radialGradient></defs>
          <circle cx="17" cy="18" r="16.500" fill="url(#orb)" />
          <path d="M9 10q3.500-2 7-.5l-1.300 6.500q-3.500-1-7 .5z" fill="#ea5b2c" /><path d="M17.500 10q4 2 8 .3L24 17q-4 1.500-8-.5z" fill="#9cc948" />
          <path d="M7.300 18q3.500-1.500 7-.3L13 24q-3.500-1.300-7 .3z" fill="#47b1e8" /><path d="M15.800 18.500q4 2 8 .3L22.300 25q-4 1.500-8-.6z" fill="#fbc531" />
        </Svg>
      </SevenCell>
      <SevenCell $w={54} $ml={12} $open><ChromeLogo s={29} /></SevenCell>
      <SevenCell $w={28} $ml={16}>
        <Svg w={28} h={23}><path d="M0 0h28v23H0z" fill="#c9ccd1" /><path d="M1 3h26v19H1z" fill="#070707" /><text x="3" y="11" fontFamily="Liberation Mono" fontSize="7.500" fontWeight="700" fill="#eee">C:\_</text></Svg>
      </SevenCell>
      <SevenCell $w={32} $ml={29}>
        <Svg w={31} h={27}><path d="M1 2h11l2 3h15v20H1z" fill="#f0d88a" /><path d="M3 0h10v6H3z" fill="#c8d68c" /><path d="M0 8h31v17H0z" fill="#f8e7a4" /><path d="M5 27v-9q0-3 3-3h14q3 0 3 3v9h-5v-7H10v7z" fill="#7fbfe6" /></Svg>
      </SevenCell>
      <SevenCell $w={27} $ml={29}>
        <Svg w={27} h={26}><rect width="27" height="26" rx="4" fill="#c4150c" /><path d="M5 20q7-5 8.500-13.500.5-2 0-2.500-1 1 0 4.500Q16 16 22 17.500q1.500-.5 0-1.500-8-.5-14 3-3 2-3 1z" stroke="#fff" strokeWidth="1.500" /></Svg>
      </SevenCell>
      <SevenCell $w={32} $ml={29}><Svg w={32} h={28} vb="0 0 32 28"><circle cx="15" cy="17" r="9" stroke="#2c78b8" strokeWidth="4" /><path d="M3 14Q16-2 28 3" stroke="#d8c640" strokeWidth="2.500" /></Svg></SevenCell>
      <SevenCell $w={30} $ml={27}><Svg w={30} h={28}><circle cx="15" cy="14" r="13" fill="#2c5cc0" /></Svg></SevenCell>
      <SevenCell $w={56} $ml={15} $lit><Svg w={26} h={20}><path d="m13 0 4 8h9l-7 6 2 6H5l2-6-7-6h9z" fill="#9fc36b" /></Svg></SevenCell>
      <SevenCell $w={50} $ml={3} $lit><TeamsLogo /></SevenCell>
      <SevenCell $w={55} $ml={8} $lit><StarLogo s={28} /></SevenCell>
      <SevenTray>
        <Svg w={7} h={4}><path d="M3.500 0 7 4H0z" fill="#e8e8e8" /></Svg>
        <Svg w={14} h={14} style={{ marginLeft: 4 }}><path d="M1 1v13" stroke="#eee" strokeWidth="1.500" /><path d="M1.500 1H7v1.500h6.500L11 8H7V6.500H1.500z" fill="#eee" /></Svg>
        <Svg w={14} h={14} stroke="#eee" strokeWidth="1.400"><path d="M4.500 3.500h9v7h-9zM7 13.300h5M9 10.500v3M1 1v3.500h3V1M2.500 4.500V8" /></Svg>
        <Svg w={15} h={14}><path d="M0 4.500h3L7 1v12L3 9.500H0z" fill="#eee" /><path d="M9 5q1.500 2 0 4M11 3q3 4 0 8M13 1.500q4 5.500 0 11" stroke="#ddd" /></Svg>
        <SevenClock><Label $size={11} $font={noto} $track={-0.25}>2:35 PM</Label><Label $size={11} $font={noto} $track={-0.3}>8/27/2020</Label></SevenClock>
        <ShowDesk />
      </SevenTray>
    </SevenBar>
  );
}

function CallControls() {
  return (
    <CallBar>
      <CallTimer><Label $size={14} $weight={600} $track={-0.4}>01:04:33</Label></CallTimer>
      <CallGroup $w={208}>
        <CallBtn><Svg w={22} h={21}><path d="M1 4.500h14v12H1zM16 8.500l6-4v12l-6-4z" fill="#fff" /><path d="M1.500 21 21.500 1" stroke="#373737" strokeWidth="3.500" /><path d="M.5 20.500 21 .5" stroke="#fff" strokeWidth="1.400" /></Svg></CallBtn>
        <CallBtn><MicOff s={22} /></CallBtn>
        <CallBtn><Svg w={22} h={20} stroke="#fff" strokeWidth="1.400"><path d="M8 17H1.500q-.8 0-.8-.8V2.300q0-.8.8-.8h19q.8 0 .8.800v13.900q0 .8-.8.800H14" /><path d="M11 19V7M6.500 11 11 6.500l4.500 4.500" strokeWidth="2.400" /></Svg></CallBtn>
        <CallBtn><Svg w={22} h={6}><circle cx="3" cy="3" r="2.700" fill="#fff" /><circle cx="11" cy="3" r="2.700" fill="#fff" /><circle cx="19" cy="3" r="2.700" fill="#fff" /></Svg></CallBtn>
      </CallGroup>
      <CallGroup $w={156} $dark $line>
        <CallBtn><Svg w={18} h={22} stroke="#fff" strokeWidth="1.300" strokeLinejoin="round" strokeLinecap="round"><path d="M4.500 12.500V4.500q0-1.300 1.200-1.300T7 4.500V10V2q0-1.300 1.300-1.300T9.500 2v8V3q0-1.300 1.200-1.300T12 3v8V5.500q0-1.200 1.100-1.200t1.200 1.200V13q1.500-2.500 2.700-2t.3 2l-3 6q-1.500 2.300-5 2.300T4 19.500Q1 15 1 11V7.500q0-1.300 1-1.300t1.200 1.300L4.500 11" /></Svg></CallBtn>
        <CallBtn><Svg w={18} h={18} stroke="#fff" strokeWidth="1.400" strokeLinejoin="round"><path d="M1.500 1h15q.6 0 .6.600V17l-3.500-3.500H1.500q-.6 0-.6-.6V1.600q0-.6.6-.6zM4.500 5.500h9M4.500 9h6" /></Svg></CallBtn>
        <CallBtn><Svg w={18} h={19} stroke="#fff" strokeWidth="1.300"><circle cx="4.500" cy="6" r="2.600" /><circle cx="13" cy="3.700" r="2.900" /><path d="M8.700 9.500h8.600v5.200a3.800 3.800 0 0 1-3.800 3.800h-1a3.800 3.800 0 0 1-3.800-3.800zM6.500 11H.8v3.500a3.400 3.400 0 0 0 5.700 2.700" /></Svg></CallBtn>
      </CallGroup>
      <CallAction><RequestBtn><Label $size={13.5} $weight={700} $track={-0.42}>Request control</Label></RequestBtn></CallAction>
      <HangUp><Svg w={21} h={9}><path d="M10.500 0C4 0 0 3 .3 6q.2 2.500 2.500 2.200l2.500-.5q1.500-.3 1.500-1.700V4.800q3.700-1.300 7.400 0V6q0 1.400 1.500 1.700l2.500.5q2.300.3 2.500-2.200C21 3 17 0 10.500 0z" fill="#fff" /></Svg></HangUp>
    </CallBar>
  );
}

function Participants() {
  return (
    <Roster>
      <Tile $w={201} $bg="#1a1a1a" $end><Avatar $bg="#6264a7"><Label $size={13.5} $weight={700} $track={-0.2}>+9</Label></Avatar></Tile>
      {tiles.map((t, i) => (
        <Tile key={i} $bg={t.bg} $w={t.w}>
          <Avatar $speaking={t.speaking}><Person /></Avatar>
          {t.muted && <MuteBadge><MicOff s={14} /></MuteBadge>}
        </Tile>
      ))}
    </Roster>
  );
}

function TenTaskbar() {
  return (
    <TenBar>
      <StartBtn><Svg w={16}><path d="M0 2.200 6.700 1.300V7.600H0zM7.500 1.200 16 0v7.600H7.500zM0 8.400h6.700v6.300L0 13.800zM7.500 8.400H16V16l-8.500-1.200z" fill="#fff" /></Svg></StartBtn>
      <SearchBox>
        <Svg w={17} h={17} stroke="#222" strokeWidth="1.300"><circle cx="10.500" cy="6" r="5.400" /><path d="m6.500 10-6 6" /></Svg>
        <Label $size={15} $track={-0.52}>Type here to search</Label>
      </SearchBox>
      <TenCell $w={50}><Svg w={17} h={16} stroke="#fff" strokeWidth="1.200"><path d="M.5 0v2.500h10.500V0M.5 16v-2.500h10.500V16M.6 4.500h10.400v7H.6zM14.500 0v3M14.500 9v7" /><path d="M13.200 4.500h2.700v3h-2.700z" fill="#fff" stroke="none" /></Svg></TenCell>
      <TenCell $w={50}><Folder /></TenCell>
      <TenCell $run><ChromeLogo s={23} /></TenCell>
      <TenCell $run>
        <Svg w={24} vb="0 0 24 24"><rect width="24" height="23" rx="2.500" fill="#7cae0a" /><path d="M6.500 9.500a5.500 5.500 0 0 1 11 0zM6.500 10.300h11V20h-11zM3 10.500h2.200v7H3zM18.800 10.500H21v7h-2.200z" fill="#fff" /><path d="m8 3 1.500 2.500M16 3l-1.500 2.500" stroke="#fff" /><circle cx="12" cy="15" r="3.500" stroke="#7cae0a" strokeWidth="1.700" /><circle cx="12" cy="15" r="1.200" fill="#7cae0a" /></Svg>
      </TenCell>
      <TenCell $run>
        <Svg w={20} h={22}><path d="m9 1 8 3q3 6 0 11l-7 6z" fill="#4a4a4a" /><ellipse cx="8" cy="11" rx="6.500" ry="10" transform="rotate(-12 8 11)" fill="#c9cccc" stroke="#f2f2f2" /><ellipse cx="8.500" cy="11" rx="4" ry="7" transform="rotate(-12 8 11)" fill="#b0b4b5" /><ellipse cx="9.500" cy="11.500" rx="2" ry="3.800" fill="#e8eaea" /></Svg>
      </TenCell>
      <TenCell $run>
        <Svg w={22} h={22}><path d="m7 1 14 1v18l-4-1z" fill="#c9a95c" /><path d="M6.500 1.500 19.500 3 15 20.500 1 17z" fill="#5db5c8" /><path d="M6.500 1.500 19.500 3l-2 7-13-1z" fill="#8fd4e0" /><path d="M1 17 15 20.500l-1 1.200L0 18.500z" fill="#eee" /></Svg>
      </TenCell>
      <TenCell $run><StarLogo s={23} /></TenCell>
      <TenCell $w={48} $run $active><TeamsLogo /></TenCell>
      <TenTray>
        <TrayCell $w={24}><Svg w={12} h={7} stroke="#fff" strokeWidth="1.300"><path d="m.5 6.500 5.500-5.500 5.500 5.500" /></Svg></TrayCell>
        <TrayCell $w={24}><Svg w={11} h={16}><path d="M2.500 0h6v11h-6z" fill="#fff" /><path d="M.6 9v3.500h9.800V9M5.500 12.500V16M3.500 15.500h4" stroke="#fff" /></Svg></TrayCell>
        <TrayCell $w={24}><Svg w={16}><circle cx="8" cy="8" r="7.800" fill="#164b85" /><circle cx="10.500" cy="5.500" r="2.800" stroke="#fff" strokeWidth="1.300" /><path d="m0 9 6 2.500 3-3" stroke="#fff" strokeWidth="2.500" /><circle cx="5.500" cy="11.500" r="2" fill="#fff" /></Svg></TrayCell>
        <TrayCell $w={24}><Svg w={16} h={14} stroke="#fff" strokeWidth="1.100"><path d="M5 2.500h10.500v7H5M8 13h5M10.500 9.500V13M.5.500h4v4h-4zM2.500 4.500V9.500H5" /></Svg></TrayCell>
        <TrayCell $w={24}><Svg w={17} h={13} stroke="#fff" strokeWidth="1.100"><path d="M.6 4.500h2L6 1v11L2.600 8.500h-2zM8.500 4.500q1.200 2 0 4M11 2.500q2.500 4 0 8M13.500.8q4 5.700 0 11.400" /></Svg></TrayCell>
        <Stack $w={36}><Label $size={12} $track={-0.5}>ENG</Label><Label $size={12} $track={-0.3}>IN</Label></Stack>
        <Stack $w={70}><Label $size={12} $track={-0.45}>02:35 PM</Label><Label $size={12} $track={-0.45}>27-08-2020</Label></Stack>
        <TrayCell $w={40}><Svg w={16} h={16} stroke="#fff" strokeWidth="1.200"><path d="M.6.600h14.800v11.600H10.500L8 15l-2.500-2.800H.6z" /></Svg></TrayCell>
        <TrayCell $w={8} />
        <Peek />
      </TenTray>
    </TenBar>
  );
}

export default function App() {
  return (
    <Desktop>
      <Global />
      <TitleBar>
        <Svg w={12} h={12} stroke="#eee"><path d="M1 6.500h12" /></Svg>
        <Svg w={13} h={13} stroke="#eee"><path d="M1.500 3.500h9v9h-9zM4 3V.5h9.500V10H11" /></Svg>
        <Svg w={12} h={12} stroke="#eee"><path d="m1 1 10 10M11 1 1 11" /></Svg>
      </TitleBar>
      <Stage>
        <Shared>
          <Browser />
          <Gmail />
          <SevenTaskbar />
          <StarUml />
        </Shared>
        <CallControls />
      </Stage>
      <Participants />
      <TenTaskbar />
    </Desktop>
  );
}
